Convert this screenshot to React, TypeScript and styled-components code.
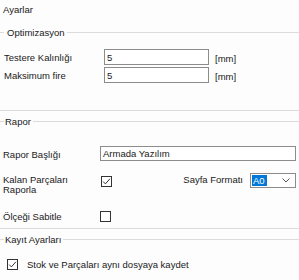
import React from 'react';
import styled, { createGlobalStyle } from 'styled-components';

const Colors = {
    text: '#1a1a1a',
    line: '#dcdcdc',
    border: '#8c8c8c',
    box: '#333333',
    accent: '#0078d7',
};

const GlobalStyle = createGlobalStyle`
    html, body {
        margin: 0;
        padding: 0;
        background: #fdfdfd;
    }
    body {
        font-family: 'Liberation Sans', Arial, sans-serif;
        font-size: 9.5px;
        color: ${Colors.text};
    }
`;

const Page = styled.div`
    width: 299px;
    height: 280px;
    overflow: hidden;
`;

const Title = styled.div`
    height: 20px;
    line-height: 20px;
    padding-left: 3px;
    margin-bottom: 6px;
`;

const Group = styled.section<{ padBottom?: number; last?: boolean }>`
    border-bottom: ${(p) => (p.last ? 'none' : `1px solid ${Colors.line}`)};
    padding-bottom: ${(p) => p.padBottom ?? 0}px;
    margin-bottom: 4px;
`;

const GroupHeader = styled.div`
    display: flex;
    align-items: center;
    height: 13px;
`;

const Rule = styled.div<{ grow?: boolean }>`
    height: 1px;
    background: ${Colors.line};
    width: ${(p) => (p.grow ? 'auto' : '4px')};
    flex: ${(p) => (p.grow ? 1 : 'none')};
`;

const GroupTitle = styled.span<{ indent?: number }>`
    padding: 0 2px 0 ${(p) => p.indent ?? 1}px;
    line-height: 13px;
`;

const Body = styled.div<{ padTop: number }>`
    padding-top: ${(p) => p.padTop}px;
    display: flex;
    flex-direction: column;
`;

const Row = styled.div<{ gap?: number; align?: string }>`
    display: flex;
    align-items: ${(p) => p.align ?? 'center'};
    margin-top: ${(p) => p.gap ?? 0}px;
`;

const Label = styled.span<{ width?: number; left?: number; shift?: number }>`
    width: ${(p) => (p.width ? `${p.width}px` : 'auto')};
    flex: none;
    padding-left: ${(p) => p.left ?? 4}px;
    padding-top: ${(p) => p.shift ?? 0}px;
    line-height: 10px;
    white-space: nowrap;
`;

const TextBox = styled.input<{ boxWidth?: number; boxHeight?: number }>`
    box-sizing: border-box;
    width: ${(p) => (p.boxWidth ? `${p.boxWidth}px` : 'auto')};
    flex: ${(p) => (p.boxWidth ? 'none' : 1)};
    height: ${(p) => p.boxHeight ?? 16}px;
    border: 1px solid ${Colors.border};
    background: #fff;
    padding: 0 0 0 2px;
    font: inherit;
    color: ${Colors.text};
    outline: none;
`;

const Unit = styled.span`
    margin-left: 6px;
    padding-top: 2px;
`;

const Check = styled.span<{ top?: number }>`
    box-sizing: border-box;
    display: inline-flex;
    align-items: center;
    justify-content: center;
    width: 11px;
    height: 11px;
    flex: none;
    margin-top: ${(p) => p.top ?? 0}px;
    border: 1px solid ${Colors.box};
    background: #fff;
`;

const Spacer = styled.div`
    flex: 1;
`;

const Select = styled.div`
    box-sizing: border-box;
    display: flex;
    align-items: center;
    width: 46px;
    height: 15px;
    margin: 0 3px 0 7px;
    padding: 0 5px 0 1px;
    border: 1px solid ${Colors.border};
    background: #fff;
`;

const Selected = styled.span`
    background: ${Colors.accent};
    color: #fff;
    line-height: 11px;
    padding: 0 2px 0 1px;
`;

const CheckBox = ({ checked, top }: { checked?: boolean; top?: number }) => (
    <Check top={top}>
        {checked && (
            <svg width="9" height="9" viewBox="0 0 9 9">
                <path d="M1.2 4.6 L3.4 6.9 L7.9 1.8" fill="none" stroke={Colors.box} strokeWidth="1" />
            </svg>
        )}
    </Check>
);

const App = () => {
    return (
        <Page>
            <GlobalStyle />
            <Title>Ayarlar</Title>

            <Group padBottom={27}>
                <GroupHeader>
                    <Rule />
                    <GroupTitle indent={3}>Optimizasyon</GroupTitle>
                    <Rule grow />
                </GroupHeader>
                <Body padTop={10}>
                    <Row>
                        <Label width={100} shift={2}>Testere Kalınlığı</Label>
                        <TextBox boxWidth={105} value="5" readOnly />
                        <Unit>[mm]</Unit>
                    </Row>
                    <Row gap={2}>
                        <Label width={100} shift={2}>Maksimum fire</Label>
                        <TextBox boxWidth={105} value="5" readOnly />
                        <Unit>[mm]</Unit>
                    </Row>
                </Body>
            </Group>

            <Group padBottom={6}>
                <GroupHeader>
                    <Rule />
                    <GroupTitle>Rapor</GroupTitle>
                    <Rule grow />
                </GroupHeader>
                <Body padTop={18}>
                    <Row>
                        <Label width={97} left={3} shift={3}>Rapor Başlığı</Label>
                        <TextBox boxHeight={15} value="Armada Yazılım" readOnly />
                        <Spacer style={{ flex: 'none', width: 3 }} />
                    </Row>
                    <Row gap={12} align="flex-start">
                        <Label width={98} left={3} shift={2}>
                            Kalan Parçaları
                            <br />
                            Raporla
                        </Label>
                        <CheckBox checked top={3} />
                        <Spacer />
                        <Label left={0} shift={2}>Sayfa Formatı</Label>
                        <Select>
                            <Selected>A0</Selected>
                            <Spacer />
                            <svg width="8" height="5" viewBox="0 0 8 5">
                                <path d="M0.5 0.5 L4 4 L7.5 0.5" fill="none" stroke="#555" strokeWidth="1" />
                            </svg>
                        </Select>
                    </Row>
                    <Row gap={16}>
                        <Label width={97} left={3}>Ölçeği Sabitle</Label>
                        <CheckBox />
                    </Row>
                </Body>
            </Group>

            <Group last>
                <GroupHeader>
                    <Rule />
                    <GroupTitle>Kayıt Ayarları</GroupTitle>
                    <Rule grow />
                </GroupHeader>
                <Body padTop={13}>
                    <Row>
                        <Label width={7} left={0} />
                        <CheckBox checked />
                        <Label left={9}>Stok ve Parçaları aynı dosyaya kaydet</Label>
                    </Row>
                </Body>
            </Group>
        </Page>
    );
};

export default App;
